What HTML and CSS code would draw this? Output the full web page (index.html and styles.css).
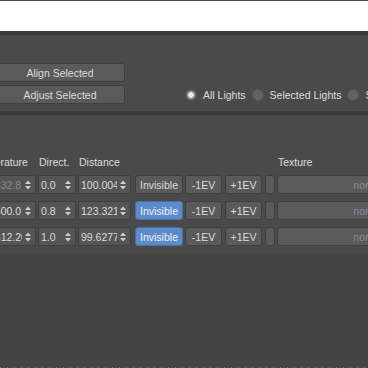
FILE: index.html
```html
<!DOCTYPE html>
<html lang="en">
<head>
    <meta charset="UTF-8">
    <title>Light Lister</title>
    <link rel="stylesheet" href="styles.css">
</head>
<body>
    <div class="viewport"></div>
    <div class="gap"></div>

    <section class="panel tools">
        <div class="btn-col">
            <button class="btn wide">Align Selected</button>
            <button class="btn wide">Adjust Selected</button>
        </div>
        <div class="radios">
            <label class="radio"><span class="dot on"></span>All Lights</label>
            <label class="radio"><span class="dot"></span>Selected Lights</label>
            <label class="radio"><span class="dot"></span>Scene Lights</label>
        </div>
    </section>

    <div class="gap"></div>

    <section class="panel lights">
        <div class="row head">
            <span class="c-temp">Temperature</span>
            <span class="c-dir">Direct.</span>
            <span class="c-dist">Distance</span>
            <span class="c-inv"></span>
            <span class="c-ev"></span>
            <span class="c-ev"></span>
            <span class="c-tog"></span>
            <span class="c-tex">Texture</span>
        </div>

        <div class="row">
            <div class="spin c-temp off"><span class="val">4832.8</span><svg class="arr" viewBox="0 0 6 10"><path d="M0 4L3 0.5L6 4ZM0 6L3 9.5L6 6Z"/></svg></div>
            <div class="spin c-dir"><span class="val">0.0</span><svg class="arr" viewBox="0 0 6 10"><path d="M0 4L3 0.5L6 4ZM0 6L3 9.5L6 6Z"/></svg></div>
            <div class="spin c-dist"><span class="val">100.004</span><svg class="arr" viewBox="0 0 6 10"><path d="M0 4L3 0.5L6 4ZM0 6L3 9.5L6 6Z"/></svg></div>
            <button class="btn c-inv">Invisible</button>
            <button class="btn c-ev">-1EV</button>
            <button class="btn c-ev">+1EV</button>
            <button class="btn c-tog"></button>
            <button class="btn c-tex"><span class="none">none</span></button>
        </div>

        <div class="row">
            <div class="spin c-temp"><span class="val">6500.0</span><svg class="arr" viewBox="0 0 6 10"><path d="M0 4L3 0.5L6 4ZM0 6L3 9.5L6 6Z"/></svg></div>
            <div class="spin c-dir"><span class="val">0.8</span><svg class="arr" viewBox="0 0 6 10"><path d="M0 4L3 0.5L6 4ZM0 6L3 9.5L6 6Z"/></svg></div>
            <div class="spin c-dist"><span class="val">123.3211</span><svg class="arr" viewBox="0 0 6 10"><path d="M0 4L3 0.5L6 4ZM0 6L3 9.5L6 6Z"/></svg></div>
            <button class="btn c-inv blue">Invisible</button>
            <button class="btn c-ev">-1EV</button>
            <button class="btn c-ev">+1EV</button>
            <button class="btn c-tog"></button>
            <button class="btn c-tex"><span class="none">none</span></button>
        </div>

        <div class="row">
            <div class="spin c-temp"><span class="val">4512.2000</span><svg class="arr" viewBox="0 0 6 10"><path d="M0 4L3 0.5L6 4ZM0 6L3 9.5L6 6Z"/></svg></div>
            <div class="spin c-dir"><span class="val">1.0</span><svg class="arr" viewBox="0 0 6 10"><path d="M0 4L3 0.5L6 4ZM0 6L3 9.5L6 6Z"/></svg></div>
            <div class="spin c-dist"><span class="val">99.62771</span><svg class="arr" viewBox="0 0 6 10"><path d="M0 4L3 0.5L6 4ZM0 6L3 9.5L6 6Z"/></svg></div>
            <button class="btn c-inv blue">Invisible</button>
            <button class="btn c-ev">-1EV</button>
            <button class="btn c-ev">+1EV</button>
            <button class="btn c-tog"></button>
            <button class="btn c-tex"><span class="none">none</span></button>
        </div>
    </section>

    <div class="rest"></div>
    <div class="dots"></div>
</body>
</html>
```

FILE: styles.css
```css
html, body { margin: 0; height: 368px; overflow: hidden; }
* { box-sizing: border-box; }
body {
    background: #444444;
    font-family: "Liberation Sans", Arial, sans-serif;
    font-size: 10.5px;
    color: #dcdcdc;
}

.viewport { height: 31px; background: #ffffff; border-top: 1px solid #4a4a4a; }
.gap { height: 4px; background: #3b3b3b; }

.panel { background: #4a4a4a; }

/* top rollout */
.tools {
    height: 76px;
    display: flex;
    align-items: flex-end;
    padding-bottom: 7px;
}
.btn-col {
    display: flex;
    flex-direction: column;
    gap: 3px;
    margin-left: -5px;
    width: 130px;
    flex: none;
}
.btn {
    font: inherit;
    color: #dcdcdc;
    background: #5a5a5a;
    border: 1px solid #3f3f3f;
    border-radius: 3px;
    padding: 0;
    height: 19px;
    white-space: nowrap;
    overflow: hidden;
}
.btn.wide { width: 100%; }
.btn.blue { background: #5b8bcb; border-color: #4a6f9f; color: #eef2f8; }

.radios { display: flex; align-items: center; gap: 6px; margin-left: 60px; height: 19px; white-space: nowrap; }
.radio { display: flex; align-items: center; gap: 6px; }
.dot {
    flex: none;
    width: 12px; height: 12px; border-radius: 50%;
    background: #626262; border: 1px solid #555555;
}
.dot.on { background: radial-gradient(circle closest-side, #ececec 0 2.5px, #909090 3px 4px, #666666 4.5px); }

/* light list */
.lights { height: 138px; padding-top: 40px; }
.row { display: flex; gap: 2px; height: 19px; margin-bottom: 7px; margin-left: -14px; white-space: nowrap; }
.row.head { height: 14px; line-height: 14px; margin-bottom: 6px; }
.row.head span { padding-left: 1px; }

.c-temp { width: 50px; flex: none; }
.row.head .c-temp { text-indent: -18px; overflow: hidden; }
.c-dir { width: 38px; flex: none; }
.c-dist { width: 53px; flex: none; margin-right: 2px; }
.c-inv { width: 48px; flex: none; }
.c-ev { width: 37px; flex: none; }
.c-ev + .c-ev { margin-left: 1px; }
.c-tog { width: 10px; flex: none; margin-left: 1px; }
.c-tex { width: 176px; flex: none; }

.spin {
    display: flex;
    align-items: center;
    background: #555555;
    border: 1px solid #3e3e3e;
    border-radius: 2px;
}
.spin .val { flex: 1; overflow: hidden; padding-left: 2px; margin-right: 3px; }
.spin.off .val { color: #8e8585; }
.arr { flex: none; width: 6px; height: 10px; margin-right: 4px; fill: #cfcfcf; }
.none { color: #8c8a9c; }

.rest { height: 114px; }
.dots {
    height: 1px;
    background: repeating-linear-gradient(to right, #9a9a9a 0 1px, transparent 1px 7px);
    opacity: 0.6;
}
```
